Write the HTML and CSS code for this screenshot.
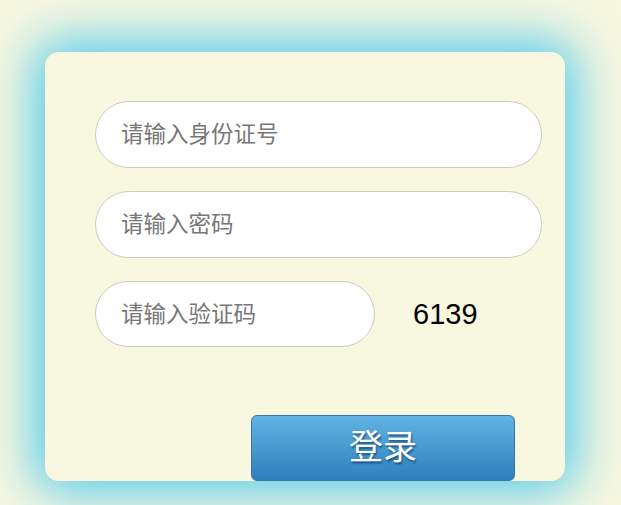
FILE: index.html
```html
<!DOCTYPE html>
<html lang="zh">
<head>
<meta charset="utf-8">
<title>登录</title>
<link rel="stylesheet" href="styles.css">
</head>
<body>
<div class="card">
  <div class="field wide"><span class="ph">请输入身份证号</span></div>
  <div class="field wide"><span class="ph">请输入密码</span></div>
  <div class="row">
    <div class="field short"><span class="ph">请输入验证码</span></div>
    <span class="code">6139</span>
  </div>
  <div class="actions">
    <button class="btn">登录</button>
  </div>
</div>
</body>
</html>
```
FILE: styles.css
```css
html, body {
  margin: 0;
  padding: 0;
  background: #f8f7e0;
  width: 621px;
  height: 505px;
  overflow: hidden;
  font-family: "Noto Sans CJK SC", "Liberation Sans", sans-serif;
}
.card {
  margin: 52px 0 0 45px;
  width: 520px;
  height: 429px;
  box-sizing: border-box;
  padding: 49px 23px 0 50px;
  background: #f8f7e0;
  border-radius: 14px;
  box-shadow: 0 0 50px 12px rgb(88, 204, 236);
  display: flex;
  flex-direction: column;
  gap: 23px;
  overflow: hidden;
}
.field {
  height: 67px;
  box-sizing: border-box;
  border: 1px solid #cbcbc4;
  border-radius: 34px;
  background: #fff;
  display: flex;
  align-items: center;
  padding: 0 0 4px 25px;
}
.wide { width: 447px; }
.short { width: 280px; height: 66px; }
.ph {
  color: #777;
  font-size: 22.5px;
  line-height: 1;
}
.row {
  display: flex;
  align-items: center;
}
.code {
  margin-left: 38px;
  font-family: "Liberation Sans", Arial, sans-serif;
  font-size: 29px;
  color: #000;
}
.actions {
  margin-top: 45px;
  padding-left: 156px;
}
.btn {
  width: 264px;
  height: 66px;
  border: 1px solid #3876a8;
  border-radius: 6px;
  background: linear-gradient(#62b3e3, #2e7fbc);
  color: #fff;
  font-family: "Noto Sans CJK SC", sans-serif;
  font-size: 34px;
  line-height: 1;
  padding: 0 0 6px 0;
  text-shadow: 1px 2px 2px rgba(0, 40, 80, 0.6);
}
```
